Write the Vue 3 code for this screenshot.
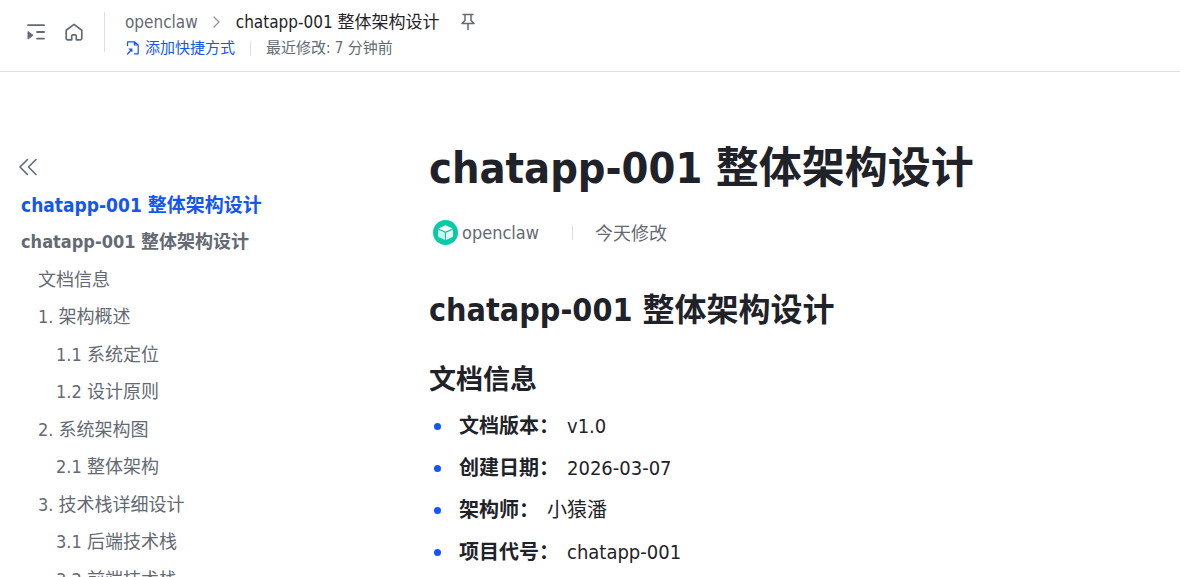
<template>
  <div class="page">
    <header class="topbar">
      <div class="topbar-actions">
        <button class="icon-button" type="button" aria-label="展开目录">
          <svg width="20" height="20" viewBox="0 0 20 20" fill="none">
            <path d="M2 3.2H18M11 10H18M11 16.6H18" stroke="currentColor" stroke-width="1.8" stroke-linecap="round"/>
            <path d="M2 9.6V17L7 13.3Z" fill="currentColor" stroke="currentColor" stroke-linejoin="round"/>
          </svg>
        </button>
        <button class="icon-button" type="button" aria-label="主页">
          <svg width="20" height="20" viewBox="0 0 20 20" fill="none">
            <path d="M2.2 8.2L10 2.4L17.8 8.2V16.2Q17.8 17.8 16.2 17.8H12.3V14.2Q12.3 12.8 11 12.8H9Q7.7 12.8 7.7 14.2V17.8H3.8Q2.2 17.8 2.2 16.2Z" stroke="currentColor" stroke-width="1.7" stroke-linejoin="round"/>
          </svg>
        </button>
      </div>

      <div class="doc-meta">
        <nav class="breadcrumb" aria-label="面包屑">
          <a class="crumb-link" href="#">openclaw</a>
          <svg class="crumb-arrow" width="12" height="12" viewBox="0 0 12 12" fill="none">
            <path d="M3 1L8 6L3 11" stroke="currentColor" stroke-width="1.3" stroke-linecap="round" stroke-linejoin="round"/>
          </svg>
          <span class="crumb-current">{{ title }}</span>
          <button class="pin-button" type="button" aria-label="置顶">
            <svg width="16" height="18" viewBox="0 0 16 18" fill="none">
              <path d="M3 1.5H13M5 1.5V7.5L2 10.5H14L11 7.5V1.5M8 10.5V16.5" stroke="currentColor" stroke-width="1.5" stroke-linecap="round" stroke-linejoin="round"/>
            </svg>
          </button>
        </nav>
        <div class="sub-row">
          <button class="shortcut-button" type="button">
            <svg width="16" height="16" viewBox="0 0 16 16" fill="none">
              <path d="M2.6 6V1.8H9.4V5H13.2V13.8H9M9.4 1.8L13.2 5" stroke="currentColor" stroke-width="1.2" stroke-linejoin="round"/>
              <path d="M3.2 8.4H7.4V12.6Z" fill="currentColor"/>
              <path d="M6.2 9.8L2.6 14" stroke="currentColor" stroke-width="1.3" stroke-linecap="round"/>
            </svg>
            添加快捷方式
          </button>
          <span class="modified">最近修改: 7 分钟前</span>
        </div>
      </div>
    </header>

    <div class="body">
      <aside class="sidebar">
        <button class="collapse-button" type="button" aria-label="收起目录">
          <svg width="20" height="20" viewBox="0 0 20 20" fill="none">
            <path d="M9.5 2.5L2 10L9.5 17.5M18 2.5L10.5 10L18 17.5" stroke="currentColor" stroke-width="1.6" stroke-linecap="round" stroke-linejoin="round"/>
          </svg>
        </button>
        <ul class="toc">
          <li v-for="(item, index) in toc" :key="index" class="toc-item">
            <a href="#" class="toc-link" :class="`level-${item.level}`">{{ item.text }}</a>
          </li>
        </ul>
      </aside>

      <main class="content">
        <h1 class="doc-title">{{ title }}</h1>
        <div class="byline">
          <a class="author" href="#">
            <svg width="25" height="25" viewBox="0 0 25 25" fill="none">
              <circle cx="12.5" cy="12.5" r="12.5" fill="#06cba5"/>
              <path d="M12.5 5.2L19.6 8.4L12.5 11.6L5.4 8.4Z" fill="#fff"/>
              <path d="M5 9.6L12 12.7V20L6 17.2Q5 16.7 5 15.7Z" fill="#c8f8eb"/>
              <path d="M20 9.6L13 12.7V20L19 17.2Q20 16.7 20 15.7Z" fill="#e3fcf5"/>
            </svg>
            openclaw
          </a>
          <span class="byline-date">今天修改</span>
        </div>

        <h2 class="heading-1">{{ title }}</h2>
        <h3 class="heading-2">文档信息</h3>
        <ul class="info-list">
          <li v-for="row in info" :key="row.label" class="info-row">
            <strong class="info-label">{{ row.label }}：</strong>
            <span>{{ row.value }}</span>
          </li>
        </ul>
      </main>
    </div>
  </div>
</template>

<script setup>
const title = 'chatapp-001 整体架构设计'

const toc = [
  { text: title, level: 0 },
  { text: title, level: 1 },
  { text: '文档信息', level: 2 },
  { text: '1. 架构概述', level: 2 },
  { text: '1.1 系统定位', level: 3 },
  { text: '1.2 设计原则', level: 3 },
  { text: '2. 系统架构图', level: 2 },
  { text: '2.1 整体架构', level: 3 },
  { text: '3. 技术栈详细设计', level: 2 },
  { text: '3.1 后端技术栈', level: 3 },
  { text: '3.2 前端技术栈', level: 3 }
]

const info = [
  { label: '文档版本', value: 'v1.0' },
  { label: '创建日期', value: '2026-03-07' },
  { label: '架构师', value: '小猿潘' },
  { label: '项目代号', value: 'chatapp-001' }
]
</script>

<style>
body {
  margin: 0;
  background: #fff;
}
</style>

<style scoped>
.page {
  display: flex;
  flex-direction: column;
  height: 100vh;
  overflow: hidden;
  font-family: "DejaVu Sans Condensed", "Noto Sans CJK SC", sans-serif;
  color: #1f2329;
}

button {
  display: flex;
  align-items: center;
  padding: 0;
  border: none;
  background: none;
  color: #646a73;
  font-family: inherit;
  cursor: pointer;
}

a {
  color: inherit;
  text-decoration: none;
}

ul {
  list-style: none;
  margin: 0;
  padding: 0;
}

.topbar {
  display: flex;
  flex-shrink: 0;
  padding: 8px 26px 11px;
  border-bottom: 1px solid #dee0e3;
}

.topbar-actions {
  display: flex;
  align-items: center;
  gap: 18px;
  height: 40px;
  margin-top: 4px;
  padding-right: 20px;
  border-right: 1px solid #dee0e3;
}

.doc-meta {
  display: flex;
  flex-direction: column;
  padding-left: 20px;
}

.breadcrumb {
  display: flex;
  align-items: center;
  height: 28px;
  font-size: 17px;
  line-height: 28px;
  white-space: nowrap;
}

.crumb-link {
  color: #646a73;
}

.crumb-arrow {
  margin: 0 13px;
  color: #8f959e;
}

.pin-button {
  margin-left: 20px;
}

.sub-row {
  display: flex;
  align-items: center;
  height: 24px;
  font-size: 15px;
  line-height: 24px;
  white-space: nowrap;
}

.shortcut-button {
  gap: 4px;
  color: #1456f0;
  font-size: 15px;
  line-height: 24px;
}

.modified {
  display: flex;
  align-items: center;
  color: #646a73;
}

.modified::before {
  content: "";
  width: 1px;
  height: 15px;
  margin: 0 15px;
  background: #dee0e3;
}

.body {
  display: flex;
  flex: 1;
  min-height: 0;
}

.sidebar {
  flex: 0 0 380px;
  padding-top: 85px;
  overflow: hidden;
}

.collapse-button {
  margin-left: 18px;
}

.toc {
  padding: 16px 0 0 21px;
}

.toc-item {
  height: 37px;
  line-height: 24px;
}

.toc-item:nth-child(even) {
  height: 38px;
}

.toc-link {
  font-size: 18px;
  color: #646a73;
  white-space: nowrap;
}

.toc-link.level-0 {
  font-size: 19px;
  font-weight: 700;
  color: #1456f0;
}

.toc-link.level-1 {
  font-weight: 700;
}

.toc-link.level-2 {
  padding-left: 17px;
}

.toc-link.level-3 {
  padding-left: 35px;
}

.content {
  flex: 1;
  min-width: 0;
  padding: 66px 49px 0;
  overflow: hidden;
}

.doc-title {
  margin: 0;
  font-size: 43px;
  font-weight: 700;
  line-height: 60px;
}

.byline {
  display: flex;
  align-items: center;
  height: 28px;
  margin-top: 20px;
  padding-left: 4px;
  font-size: 18px;
  color: #646a73;
}

.author {
  display: flex;
  align-items: center;
  gap: 4px;
}

.byline-date {
  display: flex;
  align-items: center;
}

.byline-date::before {
  content: "";
  width: 1px;
  height: 15px;
  margin: 0 22px 0 33px;
  background: #dee0e3;
}

.heading-1 {
  margin: 42px 0 0;
  font-size: 32px;
  font-weight: 700;
  line-height: 44px;
}

.heading-2 {
  margin: 28px 0 0;
  font-size: 27px;
  font-weight: 700;
  line-height: 40px;
}

.info-list {
  padding-top: 10px;
}

.info-row {
  display: flex;
  align-items: center;
  height: 32px;
  margin-bottom: 10px;
  font-size: 20px;
  line-height: 32px;
}

.info-row::before {
  content: "";
  width: 7px;
  height: 7px;
  margin: 0 18px 0 5px;
  border-radius: 50%;
  background: #1456f0;
}

.info-label {
  margin-right: 8px;
}
</style>
